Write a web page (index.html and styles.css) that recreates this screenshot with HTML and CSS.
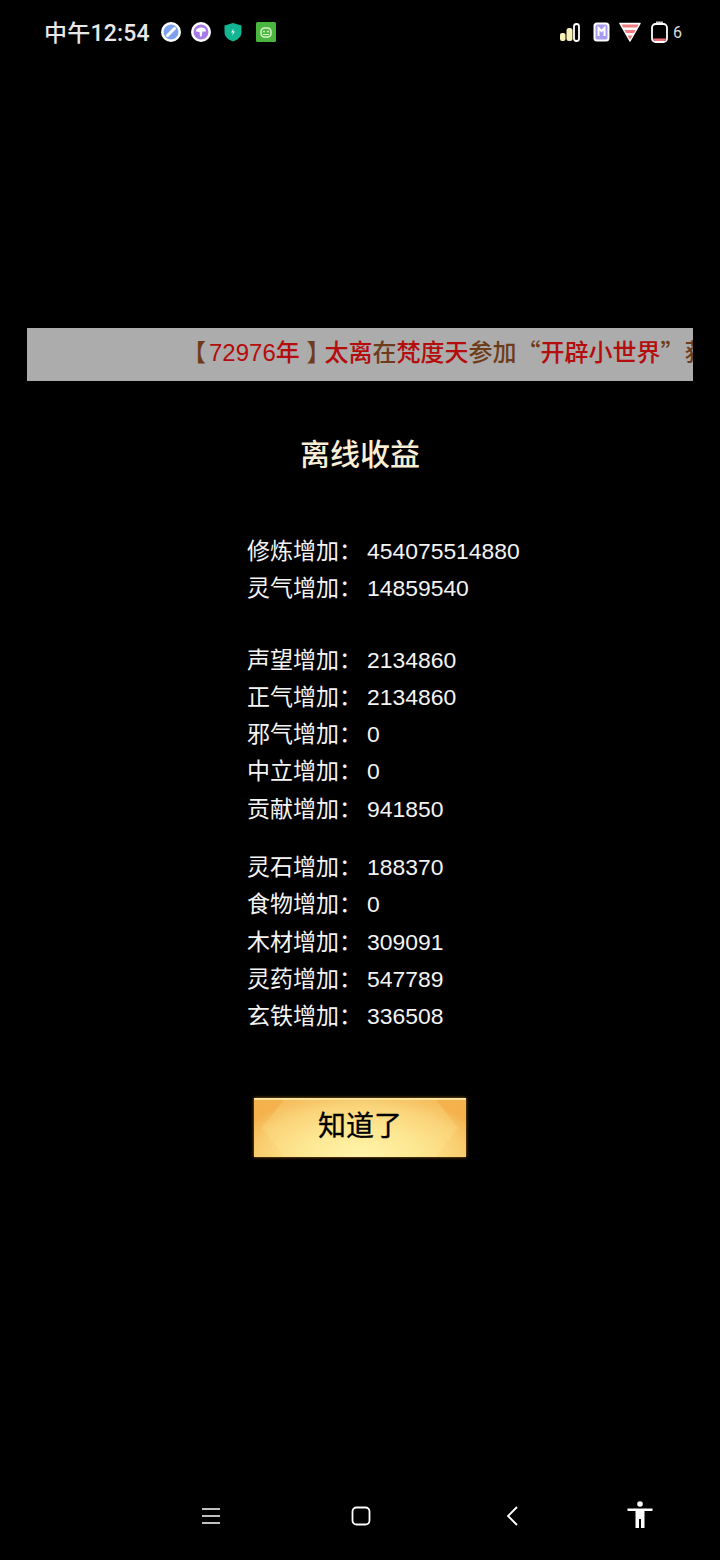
FILE: index.html
```html
<!DOCTYPE html>
<html lang="zh-CN">
<head>
    <meta charset="UTF-8">
    <meta name="viewport" content="width=device-width, initial-scale=1.0">
    <title>离线收益</title>
    <link rel="stylesheet" href="styles.css">
</head>
<body>
    <div class="page">
        <div class="status-bar">
            <div class="status-left">
                <span class="clock">中午12:54</span>
                <svg class="status-icon" width="22" height="22" viewBox="0 0 22 22">
                    <circle cx="11" cy="11" r="10" fill="#fff"/>
                    <circle cx="11" cy="11" r="7.500" fill="#7da3ee"/>
                    <path d="M7.500 14.500L14.500 7.500" stroke="#fff" stroke-width="3" stroke-linecap="round"/>
                </svg>
                <svg class="status-icon" width="22" height="22" viewBox="0 0 22 22">
                    <circle cx="11" cy="11" r="10" fill="#fff"/>
                    <circle cx="11" cy="11" r="7.500" fill="#a67be8"/>
                    <path d="M6 10.500C6 7.500 9 6.500 11.500 6.500C14 6.500 16 8 16 10.500L12.500 10.500L11.500 15.500L10 15.500L9.500 11Z" fill="#fff"/>
                </svg>
                <svg class="status-icon icon-shield" width="20" height="22" viewBox="0 0 20 22">
                    <path d="M10 2L18.500 4.500V11C18.500 16 14.500 19 10 20.500C5.500 19 1.500 16 1.500 11V4.500Z" fill="#12b592"/>
                    <path d="M10.800 7.500L8 11.500H10L9.200 14.500L12 10.500H10Z" fill="#fff"/>
                </svg>
                <svg class="status-icon icon-green" width="20" height="20" viewBox="0 0 20 20">
                    <rect width="20" height="20" rx="1.500" fill="#4ab640"/>
                    <rect x="5" y="6" width="10" height="9" rx="3.500" fill="none" stroke="#d8f2c8" stroke-width="1.500"/>
                    <circle cx="8" cy="9.500" r="1" fill="#d8f2c8"/>
                    <circle cx="12" cy="9.500" r="1" fill="#d8f2c8"/>
                    <path d="M7 12.500H13" stroke="#d8f2c8"/>
                </svg>
            </div>
            <div class="status-right">
                <svg class="icon-signal" width="20" height="20" viewBox="0 0 20 20">
                    <rect x="0" y="11" width="5.500" height="8" rx="2" fill="#f5f0b8"/>
                    <rect x="6.500" y="6" width="6" height="13" rx="2.500" fill="#f5f0b8"/>
                    <rect x="14" y="2" width="5" height="17" rx="2.500" fill="none" stroke="#fff" stroke-width="1.800"/>
                </svg>
                <svg class="icon-m" width="17" height="20" viewBox="0 0 17 20">
                    <rect x="0.500" y="0.500" width="16" height="19" rx="3.500" fill="#fff"/>
                    <rect x="2.500" y="2.500" width="12" height="15" rx="2" fill="#a79bf0"/>
                    <path d="M5.500 14V6L8.500 9L11.500 6V14" fill="none" stroke="#fff" stroke-width="2"/>
                </svg>
                <svg class="icon-filter" width="22" height="20" viewBox="0 0 22 20">
                    <path d="M1 1.500H21L11 19Z" fill="#fff" stroke="#fff" stroke-linejoin="round" stroke-width="1.500"/>
                    <path d="M2.500 2.500H19.500L18 5.500H4Z" fill="#f07c80"/>
                    <path d="M5.500 8H16.500L15 11H7Z" fill="#f07c80"/>
                    <path d="M8.500 13.500H13.500L11 17.500Z" fill="#f07c80"/>
                </svg>
                <div class="battery">
                    <svg width="17" height="22" viewBox="0 0 17 22">
                        <rect x="5" y="0.500" width="7" height="2" fill="#ccc"/>
                        <rect x="1" y="3" width="15" height="18" rx="3.500" fill="#000" stroke="#fff" stroke-width="1.800"/>
                        <path d="M2 17.500H15V18C15 19 14 20 13 20H4C3 20 2 19 2 18Z" fill="#ef7078"/>
                    </svg>
                    <span class="battery-num">6</span>
                </div>
            </div>
        </div>

        <div class="notice">
            <span class="brown open-bracket">【</span><span class="red">72976年 </span><span class="brown close-bracket">】</span><span class="red">太离</span><span class="brown">在</span><span class="red">梵度天</span><span class="brown">参加<span class="quote">“</span></span><span class="red">开辟小世界</span><span class="brown"><span class="quote">”</span>获</span>
        </div>

        <h1 class="title">离线收益</h1>

        <div class="income">
            <div class="group">
                <div class="row"><span class="label">修炼增加：</span><span class="value">454075514880</span></div>
                <div class="row"><span class="label">灵气增加：</span><span class="value">14859540</span></div>
            </div>
            <div class="group group-second">
                <div class="row"><span class="label">声望增加：</span><span class="value">2134860</span></div>
                <div class="row"><span class="label">正气增加：</span><span class="value">2134860</span></div>
                <div class="row"><span class="label">邪气增加：</span><span class="value">0</span></div>
                <div class="row"><span class="label">中立增加：</span><span class="value">0</span></div>
                <div class="row"><span class="label">贡献增加：</span><span class="value">941850</span></div>
            </div>
            <div class="group group-third">
                <div class="row"><span class="label">灵石增加：</span><span class="value">188370</span></div>
                <div class="row"><span class="label">食物增加：</span><span class="value">0</span></div>
                <div class="row"><span class="label">木材增加：</span><span class="value">309091</span></div>
                <div class="row"><span class="label">灵药增加：</span><span class="value">547789</span></div>
                <div class="row"><span class="label">玄铁增加：</span><span class="value">336508</span></div>
            </div>
        </div>

        <button class="ok-btn"><span class="ok-text">知道了</span></button>

        <div class="nav-bar">
            <svg class="nav-menu" width="18" height="16" viewBox="0 0 18 16">
                <path d="M0 1H18M0 8H18M0 15H18" stroke="#fff" stroke-width="1.600"/>
            </svg>
            <svg class="nav-home" width="20" height="20" viewBox="0 0 20 20">
                <rect x="1.500" y="1.500" width="17" height="17" rx="4" fill="none" stroke="#fff" stroke-width="1.800"/>
            </svg>
            <svg class="nav-back" width="12" height="20" viewBox="0 0 12 20">
                <path d="M11 1L2 10L11 19" fill="none" stroke="#fff" stroke-width="1.800"/>
            </svg>
            <svg class="nav-access" width="26" height="28" viewBox="0 0 26 28">
                <circle cx="13" cy="3" r="2.800" fill="#fff"/>
                <path d="M0.500 7.500H25.500V10H17.500V27H14V18H12V27H8.500V10H0.500Z" fill="#fff"/>
            </svg>
        </div>
    </div>
</body>
</html>
```

FILE: styles.css
```css
body {
    margin: 0;
    background-color: #000;
    font-family: "Liberation Sans", "Noto Sans CJK SC", sans-serif;
    color: #fff;
}
.page {
    width: 720px;
    height: 1560px;
    display: flex;
    flex-direction: column;
    align-items: center;
    overflow: hidden;
}
.status-bar {
    width: 100%;
    height: 60px;
    margin-top: 2px;
    box-sizing: border-box;
    padding: 0 38px 0 44px;
    display: flex;
    justify-content: space-between;
    align-items: center;
}
.status-left {
    display: flex;
    align-items: center;
}
.clock {
    font-family: Roboto, "Noto Sans CJK SC", sans-serif;
    font-size: 23px;
    font-weight: 500;
    letter-spacing: 0.2px;
    color: #e8e8e8;
    margin-right: 10px;
    position: relative;
    top: -1px;
}
.status-icon {
    margin-right: 8px;
}
.icon-shield {
    margin-left: 3px;
}
.icon-green {
    margin-left: 5px;
}
.status-right {
    display: flex;
    align-items: center;
}
.icon-m {
    margin-left: 13px;
}
.icon-filter {
    margin-left: 9px;
}
.battery {
    display: flex;
    align-items: center;
    gap: 5px;
    margin-left: 10px;
}
.battery-num {
    font-family: Roboto, sans-serif;
    font-size: 16px;
    color: #ddd;
}
.notice {
    width: 666px;
    height: 53px;
    line-height: 46px;
    margin-top: 266px;
    padding-left: 158px;
    box-sizing: border-box;
    background-color: #acacac;
    font-size: 24px;
    font-weight: 500;
    white-space: nowrap;
    overflow: hidden;
}
.red {
    color: #b30d0d;
}
.brown {
    color: #6e3c1a;
}
.open-bracket {
    margin-left: -3px;
    margin-right: 3px;
}
.close-bracket {
    margin-right: -6px;
}
.quote {
    font-family: "Noto Sans CJK SC", sans-serif;
}
.title {
    margin: 53px 0 0;
    font-size: 30px;
    line-height: 42px;
    font-weight: 500;
    color: #f8efd6;
}
.income {
    width: 300px;
    margin-top: 57px;
    align-self: flex-start;
    margin-left: 247px;
}
.group-second {
    margin-top: 34px;
}
.group-third {
    margin-top: 21px;
}
.row {
    height: 37.3px;
    line-height: 37.3px;
    display: flex;
    align-items: baseline;
    white-space: nowrap;
    color: #f4f4f4;
}
.label {
    width: 120px;
    flex-shrink: 0;
    font-size: 23px;
}
.value {
    font-size: 22.9px;
}
.ok-btn {
    position: relative;
    width: 212px;
    height: 59px;
    margin-top: 62px;
    padding: 0 0 9px;
    border: none;
    border-top: 2px solid #ffe39a;
    background: radial-gradient(ellipse 62% 115% at 50% 100%, #fff6ae 0%, #fde68f 45%, #f9cd6f 78%, #f4b14c 100%);
    box-shadow: 0 0 3px #a8741f;
}
.ok-btn::before {
    content: "";
    position: absolute;
    top: 0;
    bottom: 0;
    left: 8px;
    right: 8px;
    background: rgba(255, 236, 160, 0.22);
    clip-path: polygon(22px 0, calc(100% - 22px) 0, 100% 50%, calc(100% - 22px) 100%, 22px 100%, 0 50%);
}
.ok-text {
    position: relative;
    font-family: "Noto Sans CJK SC", sans-serif;
    font-size: 28px;
    line-height: 40px;
    color: #000;
    -webkit-text-stroke: 0.3px #000;
}
.nav-bar {
    width: 100%;
    height: 48px;
    margin-top: auto;
    margin-bottom: 20px;
    box-sizing: border-box;
    padding-left: 202px;
    display: flex;
    align-items: center;
}
.nav-home {
    margin-left: 131px;
}
.nav-back {
    margin-left: 135px;
}
.nav-access {
    margin-left: 109px;
    margin-bottom: 3px;
}
```
